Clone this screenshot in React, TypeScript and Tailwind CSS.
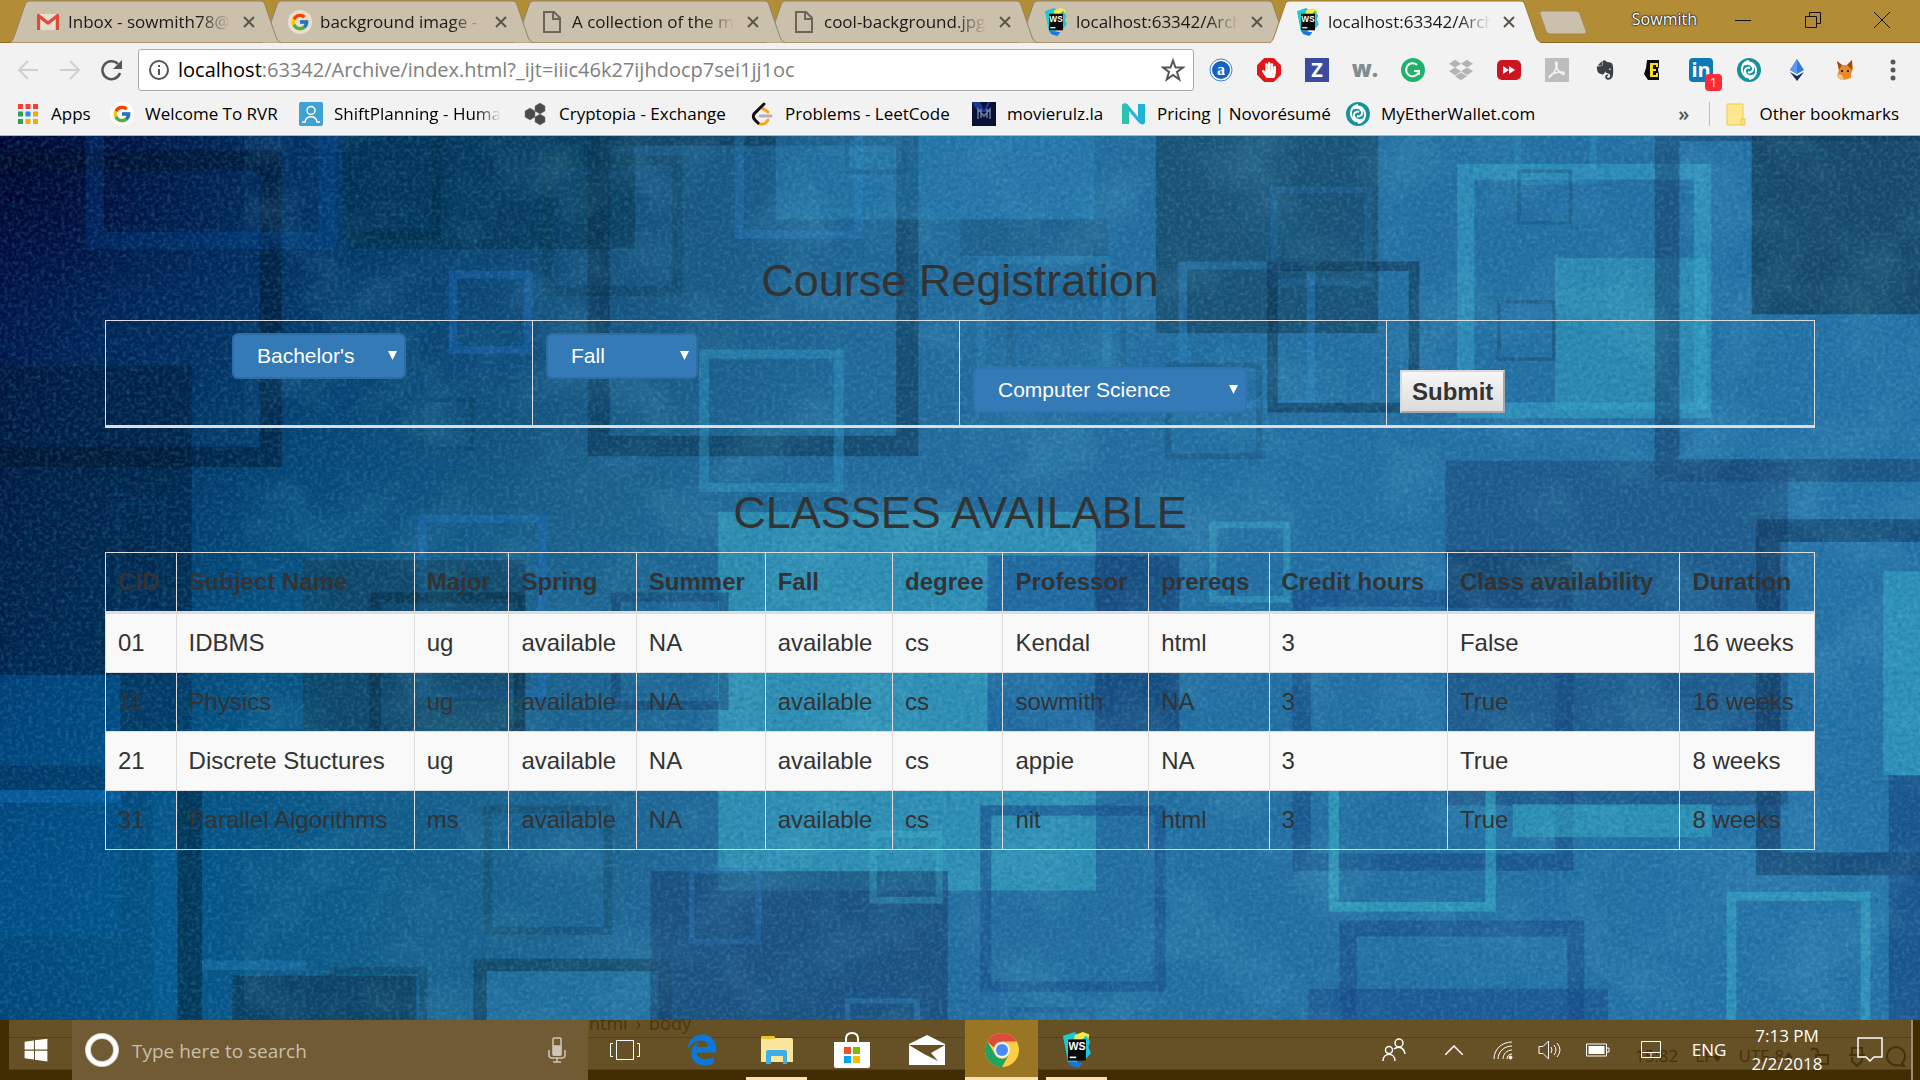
import React from "react";
import { FcGoogle } from "react-icons/fc";
import { FaDropbox, FaEvernote, FaEdgeLegacy, FaWindows, FaHandPaper } from "react-icons/fa";

type Shape = [x1: number, y1: number, x2: number, y2: number, color: string, opacity: number, stroke?: number];

const SHAPES: Shape[] = [
  [0, 416, 313, 960, "#00122c", 0.45],
  [-60, 36, 460, 594, "#000c1e", 0.42, 36],
  [0, 960, 197, 1420, "#0060a8", 0.25],
  [0, 1120, 197, 1163, "#00264c", 0.4],
  [0, 1163, 197, 1185, "#1070c0", 0.4],
  [197, 960, 313, 1110, "#001c38", 0.3],
  [570, 0, 1037, 210, "#00283a", 0.38],
  [140, -40, 550, 210, "#0058b8", 0.2, 30],
  [560, -40, 720, 193, "#00283a", 0.35, 14],
  [885, 45, 1115, 293, "#0c3a50", 0.35, 18],
  [960, -8, 1500, 575, "#0a2c48", 0.5, 36],
  [1200, -40, 1410, 192, "#2f84cc", 0.3, 15],
  [1267, 0, 1788, 158, "#2f8cc4", 0.35],
  [1380, -20, 1482, 78, "#174a78", 0.35, 8],
  [733, 248, 870, 395, "#1c6cc4", 0.38, 14],
  [1142, 387, 1378, 638, "#35a0cc", 0.4, 16],
  [685, 472, 775, 565, "#0a3450", 0.3, 7],
  [683, 678, 893, 1000, "#1f70c4", 0.4, 14],
  [1173, 673, 1790, 1340, "#38a8c4", 0.58],
  [495, 758, 858, 1110, "#10344a", 0.45],
  [604, 815, 857, 1150, "#08283e", 0.5, 18],
  [998, 815, 1190, 1022, "#16406e", 0.55, 16],
  [190, 655, 270, 850, "#0a4a80", 0.25, 6],
  [290, 1110, 330, 1600, "#002038", 0.55],
  [250, 1165, 290, 1600, "#0a6ab0", 0.25],
  [330, 1463, 500, 1480, "#2880c0", 0.35],
  [380, 1490, 680, 1600, "#0c2c46", 0.55],
  [540, 1475, 697, 1640, "#123c5c", 0.45, 12],
  [773, 1460, 1097, 1700, "#123850", 0.55, 22],
  [795, 1482, 1076, 1600, "#3090c0", 0.25],
  [790, 1190, 1000, 1418, "#154464", 0.45, 14],
  [1062, 1306, 1548, 1640, "#17406f", 0.6],
  [1125, 1300, 1243, 1435, "#2a70b4", 0.4, 10],
  [1420, 1235, 1540, 1363, "#48c0cc", 0.3, 12],
  [1380, 1530, 1502, 1640, "#3a88c0", 0.4, 9],
  [1568, 158, 1810, 222, "#17486c", 0.3],
  [1888, 0, 2251, 358, "#123a52", 0.55],
  [2075, 100, 2241, 275, "#2468a8", 0.4, 12],
  [1925, 232, 2148, 490, "#2f88c8", 0.4, 14],
  [2070, 232, 2318, 498, "#0c2e4c", 0.55, 17],
  [1596, 222, 1815, 430, "#2f90bc", 0.3, 14],
  [1645, 290, 1840, 440, "#174a70", 0.25, 10],
  [1903, 410, 2062, 580, "#174a74", 0.42, 10],
  [2380, 60, 2795, 508, "#38a8cb", 0.5, 28],
  [2540, 226, 2788, 493, "#38a8c6", 0.45],
  [2473, -20, 2608, 97, "#38a0c8", 0.3, 12],
  [2445, 300, 2541, 407, "#154468", 0.45, 6],
  [2478, 70, 2568, 167, "#154468", 0.35, 6],
  [2703, -20, 3240, 620, "#153e68", 0.55, 40],
  [2861, 0, 3136, 325, "#102e44", 0.62],
  [2361, 583, 2920, 1190, "#1a4474", 0.5],
  [2361, 740, 2568, 842, "#0e3050", 0.4],
  [2868, 686, 3240, 1313, "#0e3058", 0.55, 40],
  [1975, 690, 2108, 833, "#3cb0c8", 0.4, 12],
  [1613, 750, 1926, 1110, "#184a90", 0.55],
  [1788, 750, 1926, 1110, "#123860", 0.4],
  [2111, 810, 2570, 1305, "#164680", 0.55, 30],
  [2170, 1110, 2443, 1377, "#3cb8cc", 0.52, 17],
  [2471, 1188, 2796, 1246, "#38b0c6", 0.5],
  [1601, 1190, 1904, 1518, "#184e8c", 0.65, 18],
  [2188, 1393, 2588, 1700, "#184c88", 0.65, 28],
  [2136, 1513, 2626, 1640, "#184888", 0.55],
  [2820, 1342, 3055, 1640, "#3cb0cc", 0.52, 16],
  [3076, 778, 3200, 1137, "#38b0cc", 0.5],
  [3085, 1137, 3200, 1600, "#15427e", 0.62],
  [1650, 1545, 1790, 1640, "#184e94", 0.4, 10],
];

function Backdrop() {
  return (
    <svg className="absolute inset-0 h-full w-full" viewBox="0 11 3136 1557" preserveAspectRatio="none" aria-hidden="true">
      <defs>
        <linearGradient id="sea" x1="0" y1="0" x2="1" y2="0.12">
          <stop offset="0" stopColor="#000c44" />
          <stop offset="0.08" stopColor="#003064" />
          <stop offset="0.2" stopColor="#064f80" />
          <stop offset="0.34" stopColor="#1c608c" />
          <stop offset="0.5" stopColor="#246b9e" />
          <stop offset="1" stopColor="#2672a8" />
        </linearGradient>
        <radialGradient id="corner" cx="0" cy="0.05" r="0.5">
          <stop offset="0" stopColor="#000028" stopOpacity="0.9" />
          <stop offset="0.3" stopColor="#00083c" stopOpacity="0.4" />
          <stop offset="1" stopColor="#001848" stopOpacity="0" />
        </radialGradient>
        <radialGradient id="low" cx="0" cy="0.9" r="0.35">
          <stop offset="0" stopColor="#005c94" stopOpacity="0.45" />
          <stop offset="1" stopColor="#005c94" stopOpacity="0" />
        </radialGradient>
        <filter id="grain" x="0" y="0" width="1" height="1">
          <feTurbulence type="fractalNoise" baseFrequency="0.15" numOctaves="3" seed="4" />
          <feColorMatrix values="0 0 0 0 0.25  0 0 0 0 0.7  0 0 0 0 0.8  1.6 0 0 0 -0.68" />
        </filter>
        <filter id="shade" x="0" y="0" width="1" height="1">
          <feTurbulence type="fractalNoise" baseFrequency="0.13" numOctaves="3" seed="11" />
          <feColorMatrix values="0 0 0 0 0  0 0 0 0 0.1  0 0 0 0 0.2  1.6 0 0 0 -0.68" />
        </filter>
        <filter id="cloud" x="0" y="0" width="1" height="1">
          <feTurbulence type="fractalNoise" baseFrequency="0.008" numOctaves="5" seed="7" />
          <feColorMatrix values="0 0 0 0 0.2  0 0 0 0 0.65  0 0 0 0 0.8  2 0 0 0 -0.9" />
        </filter>
      </defs>
      <rect y="11" width="3136" height="1557" fill="url(#sea)" />
      <rect y="11" width="3136" height="1557" fill="url(#low)" />
      <rect y="11" width="3136" height="1557" fill="url(#corner)" />
      {SHAPES.map(([x1, y1, x2, y2, color, opacity, stroke], i) =>
        stroke ? (
          <rect
            key={i}
            x={x1 + stroke / 2}
            y={y1 + stroke / 2}
            width={x2 - x1 - stroke}
            height={y2 - y1 - stroke}
            fill="none"
            stroke={color}
            strokeWidth={stroke}
            opacity={opacity}
          />
        ) : (
          <rect key={i} x={x1} y={y1} width={x2 - x1} height={y2 - y1} fill={color} opacity={opacity} />
        ),
      )}
      <rect x="400" y="11" width="2736" height="1557" filter="url(#cloud)" opacity="0.18" />
      <rect y="11" width="3136" height="1557" filter="url(#grain)" opacity="0.28" />
      <rect y="11" width="3136" height="1557" filter="url(#shade)" opacity="0.38" />
    </svg>
  );
}

/* ---------- icons ---------- */

const GmailIcon = () => (
  <svg viewBox="0 0 24 24" className="h-6 w-6">
    <path d="M2 4h20v16H2z" fill="#e6dfd0" />
    <path d="M4 20V8l8 6 8-6v12" fill="none" stroke="#bdb5a5" />
    <path d="M1 20V5c0-1 1-1.500 2-1l9 7 9-7c1-.5 2 0 2 1v15h-3V9l-8 6-8-6v11z" fill="#dd4b39" />
  </svg>
);

const PageIcon = () => (
  <svg viewBox="0 0 24 24" className="h-6 w-6" fill="none" stroke="#6d6558" strokeWidth="2">
    <path d="M4 2h10l6 6v14H4zM13 2v7h7" />
  </svg>
);

const WebStormIcon = ({ className }: { className: string }) => (
  <svg viewBox="0 0 36 44" className={className} aria-hidden="true">
    <path d="M1 5l14-5 6 5-3 35-11-3z" fill="#18b4e8" />
    <path d="M1 5l13-4 4 20-10 17z" fill="#15d0d0" />
    <path d="M15 4l10-4 8 3-2 12H14z" fill="#f5ec4a" />
    <path d="M29 4l5 8-2 6 3 8-9 10-2-26z" fill="#1cc6dc" />
    <path d="M8 36l17 2-5 6-10-3z" fill="#1478e0" />
    <rect x="7" y="9" width="22" height="26" fill="#0a0a0a" />
    <rect x="9" y="30" width="8" height="2" fill="#fff" />
    <text x="18" y="22" textAnchor="middle" fontSize="13" fontWeight="700" fontFamily="Liberation Sans" fill="#fff">WS</text>
  </svg>
);

const WalletIcon = () => (
  <svg viewBox="0 0 24 24" className="h-6 w-6" aria-hidden="true">
    <circle cx="12" cy="12" r="12" fill="#17929a" />
    <path d="M12 3C5 4 3 12 7 17c2 3 6 3 8 1-4 1-8-2-7-6 1-2 3-3 5-2" fill="none" stroke="#fff" strokeWidth="2" />
    <path d="M12 21c7-1 9-9 5-14-2-3-6-3-8-1 4-1 8 2 7 6-1 2-3 3-5 2" fill="none" stroke="#fff" strokeWidth="2" />
  </svg>
);

const AppsIcon = () => (
  <svg viewBox="0 0 20 20" className="h-5 w-5" aria-hidden="true">
    {["#f04035", "#f04035", "#f04035", "#2f9e55", "#2f86f0", "#f5a80c", "#2f9e55", "#f5a80c", "#f5a80c"].map((c, i) => (
      <rect key={i} x={(i % 3) * 7.5} y={Math.floor(i / 3) * 7.5} width="5" height="5" fill={c} />
    ))}
  </svg>
);

const GoogleDisc = ({ className }: { className: string }) => (
  <span className={`flex h-6 w-6 items-center justify-center rounded-full ${className}`}>
    <FcGoogle className="h-5 w-5" />
  </span>
);

const ShiftIcon = () => (
  <svg viewBox="0 0 24 24" className="h-6 w-6" aria-hidden="true">
    <rect width="24" height="24" rx="2" fill="#3fa2d2" />
    <g fill="none" stroke="#fff" strokeWidth="1.500">
      <circle cx="12" cy="8.500" r="4" />
      <path d="M3 20h3c1-7 11-7 12 0h3" />
    </g>
  </svg>
);

const CryptopiaIcon = () => (
  <svg viewBox="0 0 24 24" className="h-6 w-6" fill="#4a4a4a" stroke="#777" strokeWidth="0.500" aria-hidden="true">
    <path d="M6 6l5 3v6l-5 3-5-3V9zM16 1l5 3v5l-5 3-5-3V4zM16 12l5 3v5l-5 3-5-3v-5z" />
  </svg>
);

const LeetIcon = () => (
  <svg viewBox="0 0 24 24" className="h-6 w-6" fill="none" strokeWidth="3" strokeLinecap="round" aria-hidden="true">
    <path d="M10 14h11" stroke="#b3b3b3" />
    <path d="M12 6l6 4M18 18c-3 5-7 5-10 3" stroke="#ffa116" />
    <path d="M14 2L4 12c-1 2-1 4 1 6l3 3" stroke="#111" />
  </svg>
);

const MovieIcon = () => (
  <svg viewBox="0 0 24 24" className="h-6 w-6" aria-hidden="true">
    <rect width="24" height="24" fill="#0a1238" />
    <path d="M0 0h8l4 8 4-8h2l-4 10H6z" fill="#1c3a90" />
    <path d="M6 17V7l6 7 6-7v10M9 7v9M15 7v9" fill="none" stroke="#6a7aa4" strokeWidth="1.500" />
  </svg>
);

const NovoIcon = () => (
  <svg viewBox="0 0 24 24" className="h-6 w-6" aria-hidden="true">
    <path d="M0 4c0-3 4-3 6-1l10 12V2h7v18c0 3-4 3-6 1L7 9v13H0z" fill="#22b4d8" />
    <path d="M0 4c0-3 4-3 6-1l1 6v13H0z" fill="#2cc4b0" />
  </svg>
);

const FolderIcon = () => (
  <svg viewBox="0 0 20 24" className="h-6 w-5" aria-hidden="true">
    <path d="M1 2h16v21H1z" fill="#ffe78e" stroke="#f0c94a" />
    <path d="M15 17h4v6h-4z" fill="#ffe07a" stroke="#f0c94a" />
  </svg>
);

const ChromeIcon = () => (
  <svg viewBox="0 0 34 34" className="h-[34px] w-[34px]" aria-hidden="true">
    <circle cx="17" cy="17" r="17" fill="#fccd45" />
    <path d="M2.300 8.500A17 17 0 0 1 31.700 8.500H17a8.500 8.500 0 0 0-8 6z" fill="#dd4b3e" />
    <path d="M2.300 8.500A17 17 0 0 0 17 34l7-12.500a8 8 0 0 1-14.500-1z" fill="#1da362" />
    <circle cx="17" cy="17" r="8" fill="#f2f2f2" />
    <circle cx="17" cy="17" r="6" fill="#4a8af4" />
  </svg>
);

/* ---------- browser frame ---------- */

type Tab = { title: string; icon: React.ReactNode; active?: boolean; z: string };

const TABS: Tab[] = [
  { title: "Inbox - sowmith78@g", icon: <GmailIcon />, z: "z-[5]" },
  { title: "background image - G", icon: <GoogleDisc className="bg-[#e8dfce]" />, z: "z-[4]" },
  { title: "A collection of the mo", icon: <PageIcon />, z: "z-[3]" },
  { title: "cool-background.jpg", icon: <PageIcon />, z: "z-[2]" },
  { title: "localhost:63342/Archi", icon: <WebStormIcon className="h-7 w-6" />, z: "z-[1]" },
  { title: "localhost:63342/Archi", icon: <WebStormIcon className="h-7 w-6" />, active: true, z: "z-10" },
];

function TabItem({ tab }: { tab: Tab }) {
  return (
    <div className={`relative -mr-[19px] flex h-[43px] w-[271px] shrink-0 items-center pl-[26px] ${tab.z}`}>
      <svg className="absolute inset-0 h-full w-full" viewBox="0 0 271 43" preserveAspectRatio="none" aria-hidden="true">
        <path
          d="M0 42.500C2 41 3 40 4 37L15 5C16 2 17 1 20 1H250C253 1 254 2 255 5L266 37C267 40 269 42 271 42.500"
          fill={tab.active ? "#f2f2f2" : "#cbc0ac"}
          stroke={tab.active ? "#9a7a35" : "#8f846c"}
        />
        {tab.active && <path d="M1 43h269" stroke="#f2f2f2" strokeWidth="2" />}
      </svg>
      <button className="relative flex items-center gap-2 text-left text-[17px] text-[#1c1a16]">
        <span className="flex w-6 justify-center">{tab.icon}</span>
        <span className="w-[163px] overflow-hidden whitespace-nowrap [mask-image:linear-gradient(to_right,black_80%,transparent)]">
          {tab.title}
        </span>
      </button>
      <button aria-label="Close tab" className="relative ml-[6px] flex h-6 w-6 items-center justify-center">
        <svg viewBox="0 0 12 12" className="h-3 w-3" stroke="#5c564a" strokeWidth="2">
          <path d="M1 1l10 10M11 1L1 11" />
        </svg>
      </button>
    </div>
  );
}

function TitleBar() {
  return (
    <div className="flex h-[43px] items-start border-b border-[#8a6a24] bg-[#b38d35] pl-[10px]">
      {TABS.map((t, i) => (
        <TabItem key={i} tab={t} />
      ))}
      <button aria-label="New tab" className="ml-[16px] mt-[10px]">
        <svg viewBox="0 0 50 25" className="h-[25px] w-[50px]">
          <path d="M4 1h34q3 0 4 3l6 17q1 3-2 3H12q-3 0-4-3L2 4q-1-3 2-3z" fill="#cbc0ac" stroke="#a08a58" />
        </svg>
      </button>
      <div className="ml-auto flex items-start">
        <span className="pr-[7px] pt-[7px] text-base text-white [text-shadow:0_0_2px_#000,0_0_2px_#333,0_0_1px_#000]">Sowmith</span>
        <button aria-label="Minimize" className="flex h-10 w-[77px] items-center justify-center">
          <svg viewBox="0 0 16 16" className="h-4 w-4" stroke="#111"><path d="M0 8.500h16" /></svg>
        </button>
        <button aria-label="Restore" className="flex h-10 w-[63px] items-center justify-center">
          <svg viewBox="0 0 16 16" className="h-4 w-4" fill="none" stroke="#111">
            <path d="M.5 4.500h11v11H.5zM4.500 4V.5h11v11H12" />
          </svg>
        </button>
        <button aria-label="Close" className="flex h-10 w-[76px] items-center justify-center">
          <svg viewBox="0 0 16 16" className="h-4 w-4" stroke="#111"><path d="M0 0l16 16M16 0L0 16" /></svg>
        </button>
      </div>
    </div>
  );
}

const EXTENSIONS: { name: string; icon: React.ReactNode }[] = [
  {
    name: "Alexa",
    icon: (
      <svg viewBox="0 0 24 24" className="h-6 w-6">
        <circle cx="12" cy="12" r="11" fill="#fff" stroke="#3a80d0" />
        <circle cx="12" cy="12" r="9" fill="#1462c8" />
        <text x="12" y="17" textAnchor="middle" fontSize="16" fontWeight="700" fontFamily="Liberation Serif" fill="#fff">a</text>
      </svg>
    ),
  },
  {
    name: "Ad blocker",
    icon: (
      <span className="flex h-6 w-6 items-center justify-center bg-[#e01818] [clip-path:polygon(30%_0,70%_0,100%_30%,100%_70%,70%_100%,30%_100%,0_70%,0_30%)]">
        <FaHandPaper className="h-4 w-4 text-white" />
      </span>
    ),
  },
  { name: "Zotero", icon: <span className="flex h-6 w-6 items-center justify-center bg-[#3c4ba0] text-xl font-bold text-white">Z</span> },
  { name: "Wikiwand", icon: <span className="pb-1 text-[22px] font-extrabold leading-6 text-[#7e8c94]">w.</span> },
  {
    name: "Grammarly",
    icon: (
      <svg viewBox="0 0 24 24" className="h-6 w-6">
        <circle cx="12" cy="12" r="12" fill="#1fb26b" />
        <path d="M16 7a6.500 6.500 0 1 0 2 6h-5M18 13v4" fill="none" stroke="#fff" strokeWidth="2" />
      </svg>
    ),
  },
  { name: "Dropbox", icon: <FaDropbox className="h-6 w-6 text-[#b4b4b4]" /> },
  {
    name: "Video speed",
    icon: (
      <svg viewBox="0 0 24 20" className="h-5 w-6">
        <rect width="24" height="20" rx="5" fill="#cc1520" />
        <path d="M6 6l6 4-6 4zM12 6l6 4-6 4z" fill="#fff" />
      </svg>
    ),
  },
  {
    name: "PDF",
    icon: (
      <svg viewBox="0 0 24 24" className="h-6 w-6">
        <rect width="24" height="24" fill="#bdbdbd" />
        <path d="M11 4c3 0 0 10-6 15-2 1-1-2 5-4s10-1 9 1-7-4-8-8 0-4 0-4z" fill="none" stroke="#f4f4f4" strokeWidth="1.500" />
      </svg>
    ),
  },
  { name: "Evernote", icon: <FaEvernote className="h-[22px] w-[22px] text-[#3a4246]" /> },
  {
    name: "Ebates",
    icon: (
      <svg viewBox="0 0 24 24" className="h-6 w-6">
        <path d="M6 2h12v6l-1 4 1 4v6H7l-4-6 2-6z" fill="#0c0c0c" />
        <path d="M9 5h8v4h-2V7h-3v4h3v2h-3v4h3v-2h2v4H9z" fill="#f8dc20" />
      </svg>
    ),
  },
  {
    name: "LinkedIn",
    icon: (
      <span className="relative flex h-6 w-6 items-center justify-center rounded-sm bg-[#0a7ab8] text-xl font-bold leading-6 text-white">
        in
        <span className="absolute left-4 top-4 flex h-[17px] w-[17px] items-center justify-center rounded-sm bg-[#ff2a35] text-xs font-normal">1</span>
      </span>
    ),
  },
  { name: "MyEtherWallet", icon: <WalletIcon /> },
  {
    name: "Ethereum",
    icon: (
      <svg viewBox="0 0 24 24" className="h-6 w-6">
        <path d="M12 1l7 11-7 4-7-4z" fill="#3878d8" />
        <path d="M12 1v15l-7-4z" fill="#5a9af0" />
        <path d="M5 14l7 4 7-4-7 9z" fill="#142c60" />
      </svg>
    ),
  },
  {
    name: "MetaMask",
    icon: (
      <svg viewBox="0 0 24 24" className="h-6 w-6">
        <path d="M4 3l5 4h5l5-5 1 9-2 5v4l-4 1-3 1H8l-3-3v-4l1-3z" fill="#ee8824" />
        <path d="M4 3l5 4-3 5zM19 2l-5 5 5 5z" fill="#9c4a20" />
        <path d="M4 16l5 1 2 5H8l-4-3z" fill="#f8c080" />
        <path d="M8 13h2M14 13h2" stroke="#222" strokeWidth="2" />
      </svg>
    ),
  },
  {
    name: "Menu",
    icon: (
      <svg viewBox="0 0 24 24" className="h-6 w-6" fill="#5a5a5a">
        <circle cx="12" cy="4" r="2.500" />
        <circle cx="12" cy="12" r="2.500" />
        <circle cx="12" cy="20" r="2.500" />
      </svg>
    ),
  },
];

function Toolbar() {
  return (
    <div className="flex h-[53px] items-center bg-[#f2f2f2] pl-[6px] pr-[3px] pt-px">
      <button aria-label="Back" className="flex w-[43px] justify-center">
        <svg viewBox="0 0 22 22" className="h-[22px] w-[22px]" fill="none" stroke="#cfcfcf" strokeWidth="2"><path d="M21 11H2M11 2l-9 9 9 9" /></svg>
      </button>
      <button aria-label="Forward" className="flex w-[41px] justify-center">
        <svg viewBox="0 0 22 22" className="h-[22px] w-[22px]" fill="none" stroke="#cfcfcf" strokeWidth="2"><path d="M1 11h19M11 2l9 9-9 9" /></svg>
      </button>
      <button aria-label="Reload" className="flex w-[43px] justify-center">
        <svg viewBox="0 0 22 22" className="h-[22px] w-[22px]"><path d="M19 14a9 9 0 1 1-2-9" fill="none" stroke="#555" strokeWidth="2.500" /><path d="M21 1v9h-9z" fill="#555" /></svg>
      </button>
      <div className="ml-[5px] flex h-[42px] flex-1 items-center rounded-[3px] border border-[#a9a9a9] bg-white pl-[9px] pr-2">
        <svg viewBox="0 0 22 22" className="mr-2 h-[22px] w-[22px] shrink-0" aria-hidden="true">
          <circle cx="11" cy="11" r="9" fill="none" stroke="#555" strokeWidth="2" />
          <path d="M11 10v6M11 6v2" stroke="#555" strokeWidth="2" />
        </svg>
        <div className="flex-1 whitespace-nowrap text-[20px] leading-7 text-[#808080]">
          <span className="text-black">localhost</span>:63342/Archive/index.html?_ijt=iiic46k27ijhdocp7sei1jj1oc
        </div>
        <button aria-label="Bookmark this page">
          <svg viewBox="0 0 24 24" className="h-6 w-6" fill="none" stroke="#555" strokeWidth="2"><path d="M12 2.500l2.500 7H22l-6 4.500 2.300 7.500L12 17l-6.300 4.500L8 14 2 9.500h7.500z" /></svg>
        </button>
      </div>
      <div className="ml-[3px] flex">
        {EXTENSIONS.map((e) => (
          <button key={e.name} aria-label={e.name} className="flex h-8 w-12 items-center justify-center">
            {e.icon}
          </button>
        ))}
      </div>
    </div>
  );
}

const BOOKMARKS: { label: string; icon: React.ReactNode; width: string; fade?: boolean }[] = [
  { label: "Apps", icon: <AppsIcon />, width: "w-[94px]" },
  { label: "Welcome To RVR", icon: <GoogleDisc className="bg-white" />, width: "w-[189px]" },
  { label: "ShiftPlanning - Huma", icon: <ShiftIcon />, width: "w-[225px]", fade: true },
  { label: "Cryptopia - Exchange", icon: <CryptopiaIcon />, width: "w-[226px]" },
  { label: "Problems - LeetCode", icon: <LeetIcon />, width: "w-[222px]" },
  { label: "movierulz.la", icon: <MovieIcon />, width: "w-[150px]" },
  { label: "Pricing | Novorésumé", icon: <NovoIcon />, width: "w-[224px]" },
  { label: "MyEtherWallet.com", icon: <WalletIcon />, width: "w-[200px]" },
];

function BookmarkBar() {
  return (
    <nav className="flex h-10 items-center border-b border-[#b6b4b6] bg-[#f2f2f2] pb-1 pl-4 pr-[21px] text-[17px] text-black">
      {BOOKMARKS.map((b) => (
        <a key={b.label} href="#" className={`flex shrink-0 items-center gap-[11px] ${b.width}`}>
          <span className="flex w-6 shrink-0 justify-center">{b.icon}</span>
          <span className={b.fade ? "whitespace-nowrap [mask-image:linear-gradient(to_right,black_85%,transparent)]" : "whitespace-nowrap"}>
            {b.label}
          </span>
        </a>
      ))}
      <button aria-label="More bookmarks" className="ml-auto pr-1 text-xl font-semibold leading-6 text-[#555]">»</button>
      <span className="mx-4 h-6 w-px bg-[#bdbdbd]" />
      <a href="#" className="flex items-center gap-[13px] whitespace-nowrap">
        <FolderIcon />
        Other bookmarks
      </a>
    </nav>
  );
}

/* ---------- page ---------- */

function Picker({ label, options, size, plain }: { label: string; options: string[]; size: string; plain?: boolean }) {
  return (
    <label className={`relative inline-block align-top ${size}`}>
      <span className="sr-only">{label}</span>
      <select
        className={`h-[46px] w-full appearance-none rounded-md border-2 bg-[#337ab7] pl-[23px] text-[21px] leading-[30px] text-white ${
          plain ? "border-[#2f74b0]" : "border-[#2e6da4]"
        }`}
      >
        {options.map((o) => (
          <option key={o}>{o}</option>
        ))}
      </select>
      <svg viewBox="0 0 10 10" className="pointer-events-none absolute right-[9px] top-[18px] h-[9px] w-[9px]" fill="#fff" aria-hidden="true">
        <path d="M0 0h10L5 10z" />
      </svg>
    </label>
  );
}

const COLUMNS = ["CID", "Subject Name", "Major", "Spring", "Summer", "Fall", "degree", "Professor", "prereqs", "Credit hours", "Class availability", "Duration"];

const ROWS = [
  ["01", "IDBMS", "ug", "available", "NA", "available", "cs", "Kendal", "html", "3", "False", "16 weeks"],
  ["11", "Physics", "ug", "available", "NA", "available", "cs", "sowmith", "NA", "3", "True", "16 weeks"],
  ["21", "Discrete Stuctures", "ug", "available", "NA", "available", "cs", "appie", "NA", "3", "True", "8 weeks"],
  ["31", "Parallel Algorithms", "ms", "available", "NA", "available", "cs", "nit", "html", "3", "True", "8 weeks"],
];

function Page() {
  const cell = "border border-[#ddd]";
  return (
    <main className="relative flex-1 overflow-hidden font-['Liberation_Sans',sans-serif] text-[#333]">
      <Backdrop />
      <div className="relative mx-auto max-w-[1710px] pt-[120px]">
        <h2 className="mb-[14px] text-center text-[45px] leading-[50px]">Course Registration</h2>
        <form onSubmit={(e) => e.preventDefault()}>
          <div className="grid h-[108px] grid-cols-4 divide-x divide-[#ddd] border border-b-[3px] border-[#ddd]">
            <div className="flex items-start justify-center pt-3">
              <Picker label="Degree" options={["Bachelor's", "Master's"]} size="w-[174px]" />
            </div>
            <div className="flex items-start pl-[13px] pt-3">
              <Picker label="Term" options={["Fall", "Spring", "Summer"]} size="w-[152px]" />
            </div>
            <div className="flex items-end pb-3 pl-[13px]">
              <Picker label="Major" options={["Computer Science"]} size="w-[274px]" plain />
            </div>
            <div className="flex items-end pb-3 pl-[13px]">
              <button type="submit" className="h-[43px] border-2 border-[#a8a8a8] border-l-[#d8d8d8] border-t-[#d8d8d8] bg-linear-to-b from-[#f6f6f6] to-[#dcdcdc] px-[10px] text-2xl font-bold leading-8">
                Submit
              </button>
            </div>
          </div>
        </form>
        <h2 className="mb-[14px] mt-[60px] text-center text-[45px] leading-[50px]">CLASSES AVAILABLE</h2>
        <table className="w-full border-collapse text-left text-2xl leading-[34px]">
          <thead>
            <tr>
              {COLUMNS.map((c) => (
                <th key={c} className={`${cell} border-b-[3px] p-3 font-bold`}>{c}</th>
              ))}
            </tr>
          </thead>
          <tbody>
            {ROWS.map((r) => (
              <tr key={r[0]} className="odd:bg-[#f9f9f9]">
                {r.map((v, i) => (
                  <td key={i} className={`${cell} p-3`}>{v}</td>
                ))}
              </tr>
            ))}
          </tbody>
        </table>
      </div>
    </main>
  );
}

/* ---------- taskbar ---------- */

function TaskButton({ label, children, open, active }: { label: string; children: React.ReactNode; open?: boolean; active?: boolean }) {
  return (
    <button aria-label={label} className={`relative flex h-[60px] w-[73px] items-center justify-center ${active ? "bg-[#9a7624]" : ""}`}>
      {children}
      {active && <span className="absolute inset-x-0 bottom-0 h-[3px] bg-[#fbe0b0]" />}
      {open && <span className="absolute inset-x-[6px] bottom-0 h-[3px] bg-[#fbe0b0]" />}
    </button>
  );
}

function Taskbar() {
  return (
    <footer className="relative flex h-[60px] overflow-hidden bg-[#422c02] text-white">
      <div className="absolute inset-x-[9px] top-0 h-[50px] border-b border-[#594313] bg-[#665025]" />
      <div className="absolute inset-x-[9px] top-[17px] h-px bg-[#56410f]" />
      <div aria-hidden="true" className="absolute left-[589px] -top-[11px] flex gap-2 text-[18px] leading-7 text-[#4b370e]">
        <span>html</span>
        <span>›</span>
        <span>body</span>
      </div>
      <div aria-hidden="true" className="absolute right-[14px] top-6 flex items-center gap-[17px] text-[17px] leading-6 text-[#46320a]">
        <span>15:82</span>
        <span>LF♦</span>
        <span>UTF-8♦</span>
        <svg viewBox="0 0 20 22" className="h-[22px] w-5" fill="none" stroke="#46320a" strokeWidth="2"><path d="M6 10h12v9H6zM8 10V7a4 4 0 0 0-7-2" /></svg>
        <svg viewBox="0 0 20 22" className="h-[22px] w-5" fill="none" stroke="#46320a" strokeWidth="2"><path d="M2 10h16M5 9V3h10v6M5 12v4l5 5 5-5v-4" /></svg>
        <svg viewBox="0 0 22 22" className="h-[22px] w-[22px]" fill="none" stroke="#46320a" strokeWidth="2"><path d="M18 18l2 3-6-1a9 9 0 1 1 4-2z" /></svg>
      </div>

      <button aria-label="Start" className="relative flex w-[72px] items-center justify-center">
        <FaWindows className="h-[26px] w-[26px]" />
      </button>
      <label className="relative flex w-[516px] items-center bg-[#705b34] pl-[13px] pr-[22px]">
        <svg viewBox="0 0 34 34" className="h-[34px] w-[34px]" aria-hidden="true">
          <circle cx="17" cy="17" r="14" fill="none" stroke="#d8d2c6" strokeWidth="6" />
          <circle cx="17" cy="17" r="14" fill="none" stroke="#fff" strokeWidth="4" />
        </svg>
        <span className="sr-only">Search</span>
        <input className="ml-[13px] min-w-0 flex-1 bg-transparent pt-[2px] text-[19px] placeholder:text-[#c8bfae] focus:outline-none" placeholder="Type here to search" />
        <svg viewBox="0 0 18 26" className="h-[26px] w-[18px]" fill="none" stroke="#cdc6b8" strokeWidth="1.500" aria-hidden="true">
          <rect x="5" y="1" width="8" height="17" rx="1" />
          <rect x="5.500" y="9" width="7" height="9" fill="#cdc6b8" />
          <path d="M1 13v5c0 2 1 3 3 3h10c2 0 3-1 3-3v-5M9 21v4M5 25h8" />
        </svg>
      </label>

      <div className="relative flex">
        <TaskButton label="Task view">
          <svg viewBox="0 0 32 20" className="h-5 w-8" fill="none" stroke="#fff">
            <path d="M7.500.5h17v19h-17zM4 3.500H1.500v13H4M28 3.500h2.500v13H28" />
          </svg>
        </TaskButton>
        <div className="ml-1 flex gap-[2px]">
          <TaskButton label="Edge"><FaEdgeLegacy className="h-8 w-8 text-[#0a78d6]" /></TaskButton>
          <TaskButton label="File Explorer" open>
            <svg viewBox="0 0 32 28" className="h-7 w-8">
              <path d="M0 2q0-2 2-2h10q2 0 2 2h16q2 0 2 2v22H0z" fill="#fbe59a" />
              <path d="M0 2q0-2 2-2h10q2 0 2 3H0z" fill="#f0c430" />
              <path d="M5 28V16q0-2 2-2h17q2 0 2 2v12h-4v-8H10v8z" fill="#3eb0e8" />
            </svg>
          </TaskButton>
          <TaskButton label="Store">
            <svg viewBox="0 0 36 36" className="h-9 w-9">
              <path d="M12 12V7q0-6 6-6t6 6v5" fill="none" stroke="#fff" strokeWidth="2" />
              <path d="M0 10h36v24q0 2-2 2H2q-2 0-2-2z" fill="#fff" />
              <path d="M10 15h7v7h-7z" fill="#f25022" /><path d="M19 15h7v7h-7z" fill="#7fba00" />
              <path d="M10 24h7v7h-7z" fill="#00a4ef" /><path d="M19 24h7v7h-7z" fill="#ffb900" />
            </svg>
          </TaskButton>
          <TaskButton label="Mail">
            <svg viewBox="0 0 36 30" className="h-[30px] w-9">
              <path d="M0 9L18 0l18 9v21H0z" fill="#fff" />
              <path d="M0 10h36L22 18l7 8L15 19z" fill="#665025" />
            </svg>
          </TaskButton>
          <TaskButton label="Chrome" active><ChromeIcon /></TaskButton>
          <TaskButton label="WebStorm" open><WebStormIcon className="h-9 w-9" /></TaskButton>
        </div>
      </div>

      <div className="relative ml-auto flex items-center text-[17px]">
        <button aria-label="People" className="flex w-[66px] justify-center">
          <svg viewBox="0 0 24 24" className="h-6 w-6" fill="none" stroke="#fff" strokeWidth="1.500">
            <circle cx="7" cy="12" r="3.500" /><path d="M1 23c0-9 12-9 12 0" />
            <circle cx="17" cy="5" r="4" /><path d="M12 11c5-4 10-1 11 5" />
          </svg>
        </button>
        <button aria-label="Show hidden icons" className="flex w-[54px] justify-center">
          <svg viewBox="0 0 18 10" className="h-[10px] w-[18px]" fill="none" stroke="#fff" strokeWidth="1.500"><path d="M0 10l9-9 9 9" /></svg>
        </button>
        <button aria-label="Network" className="flex w-11 justify-center">
          <svg viewBox="0 0 20 20" className="h-5 w-5" fill="none" stroke="#fff">
            <path d="M1 19C1 9 9 2 19 2M5 19c0-7 6-13 14-13M10 19c0-5 4-9 9-9" /><path d="M14 19c0-3 2-5 5-5" /><circle cx="17.500" cy="17.500" r="1.500" fill="#fff" />
          </svg>
        </button>
        <button aria-label="Volume" className="flex w-[50px] justify-center">
          <svg viewBox="0 0 24 20" className="h-5 w-6" fill="none" stroke="#fff">
            <path d="M1 6.500h4L10.500 1v18L5 13.500H1zM13 7q2 3 0 6M16 5q4 5 0 10M19 3q6 7 0 14" />
          </svg>
        </button>
        <button aria-label="Battery" className="flex w-[46px] justify-center">
          <svg viewBox="0 0 24 14" className="h-[14px] w-6"><path d="M.5 1h20v12H.5zM21 5h2v4h-2" fill="none" stroke="#fff" /><path d="M2.500 3h16v8h-16z" fill="#fff" /></svg>
        </button>
        <button aria-label="Touchpad" className="flex w-[60px] justify-center">
          <svg viewBox="0 0 20 18" className="h-[18px] w-5" fill="none" stroke="#fff"><path d="M.5.5h19v16H.5zM.5 11.500h19M10 11.500v5" /></svg>
        </button>
        <button className="w-14 text-center">ENG</button>
        <button className="w-[100px] text-center leading-7">
          <span className="block">7:13 PM</span>
          <span className="block">2/2/2018</span>
        </button>
        <button aria-label="Notifications" className="mr-2 flex w-[66px] justify-center">
          <svg viewBox="0 0 26 26" className="h-[26px] w-[26px]" fill="none" stroke="#fff" strokeWidth="1.500"><path d="M1 1h24v19h-8l-4 4-4-4H1z" /></svg>
        </button>
        <button aria-label="Show desktop" className="h-[60px] w-[9px] border-l-2 border-[#9a8d70]" />
      </div>
    </footer>
  );
}

export default function App() {
  return (
    <div className="flex min-h-screen flex-col font-['Open_Sans','Noto_Sans',sans-serif]">
      <header>
        <TitleBar />
        <Toolbar />
        <BookmarkBar />
      </header>
      <Page />
      <Taskbar />
    </div>
  );
}
